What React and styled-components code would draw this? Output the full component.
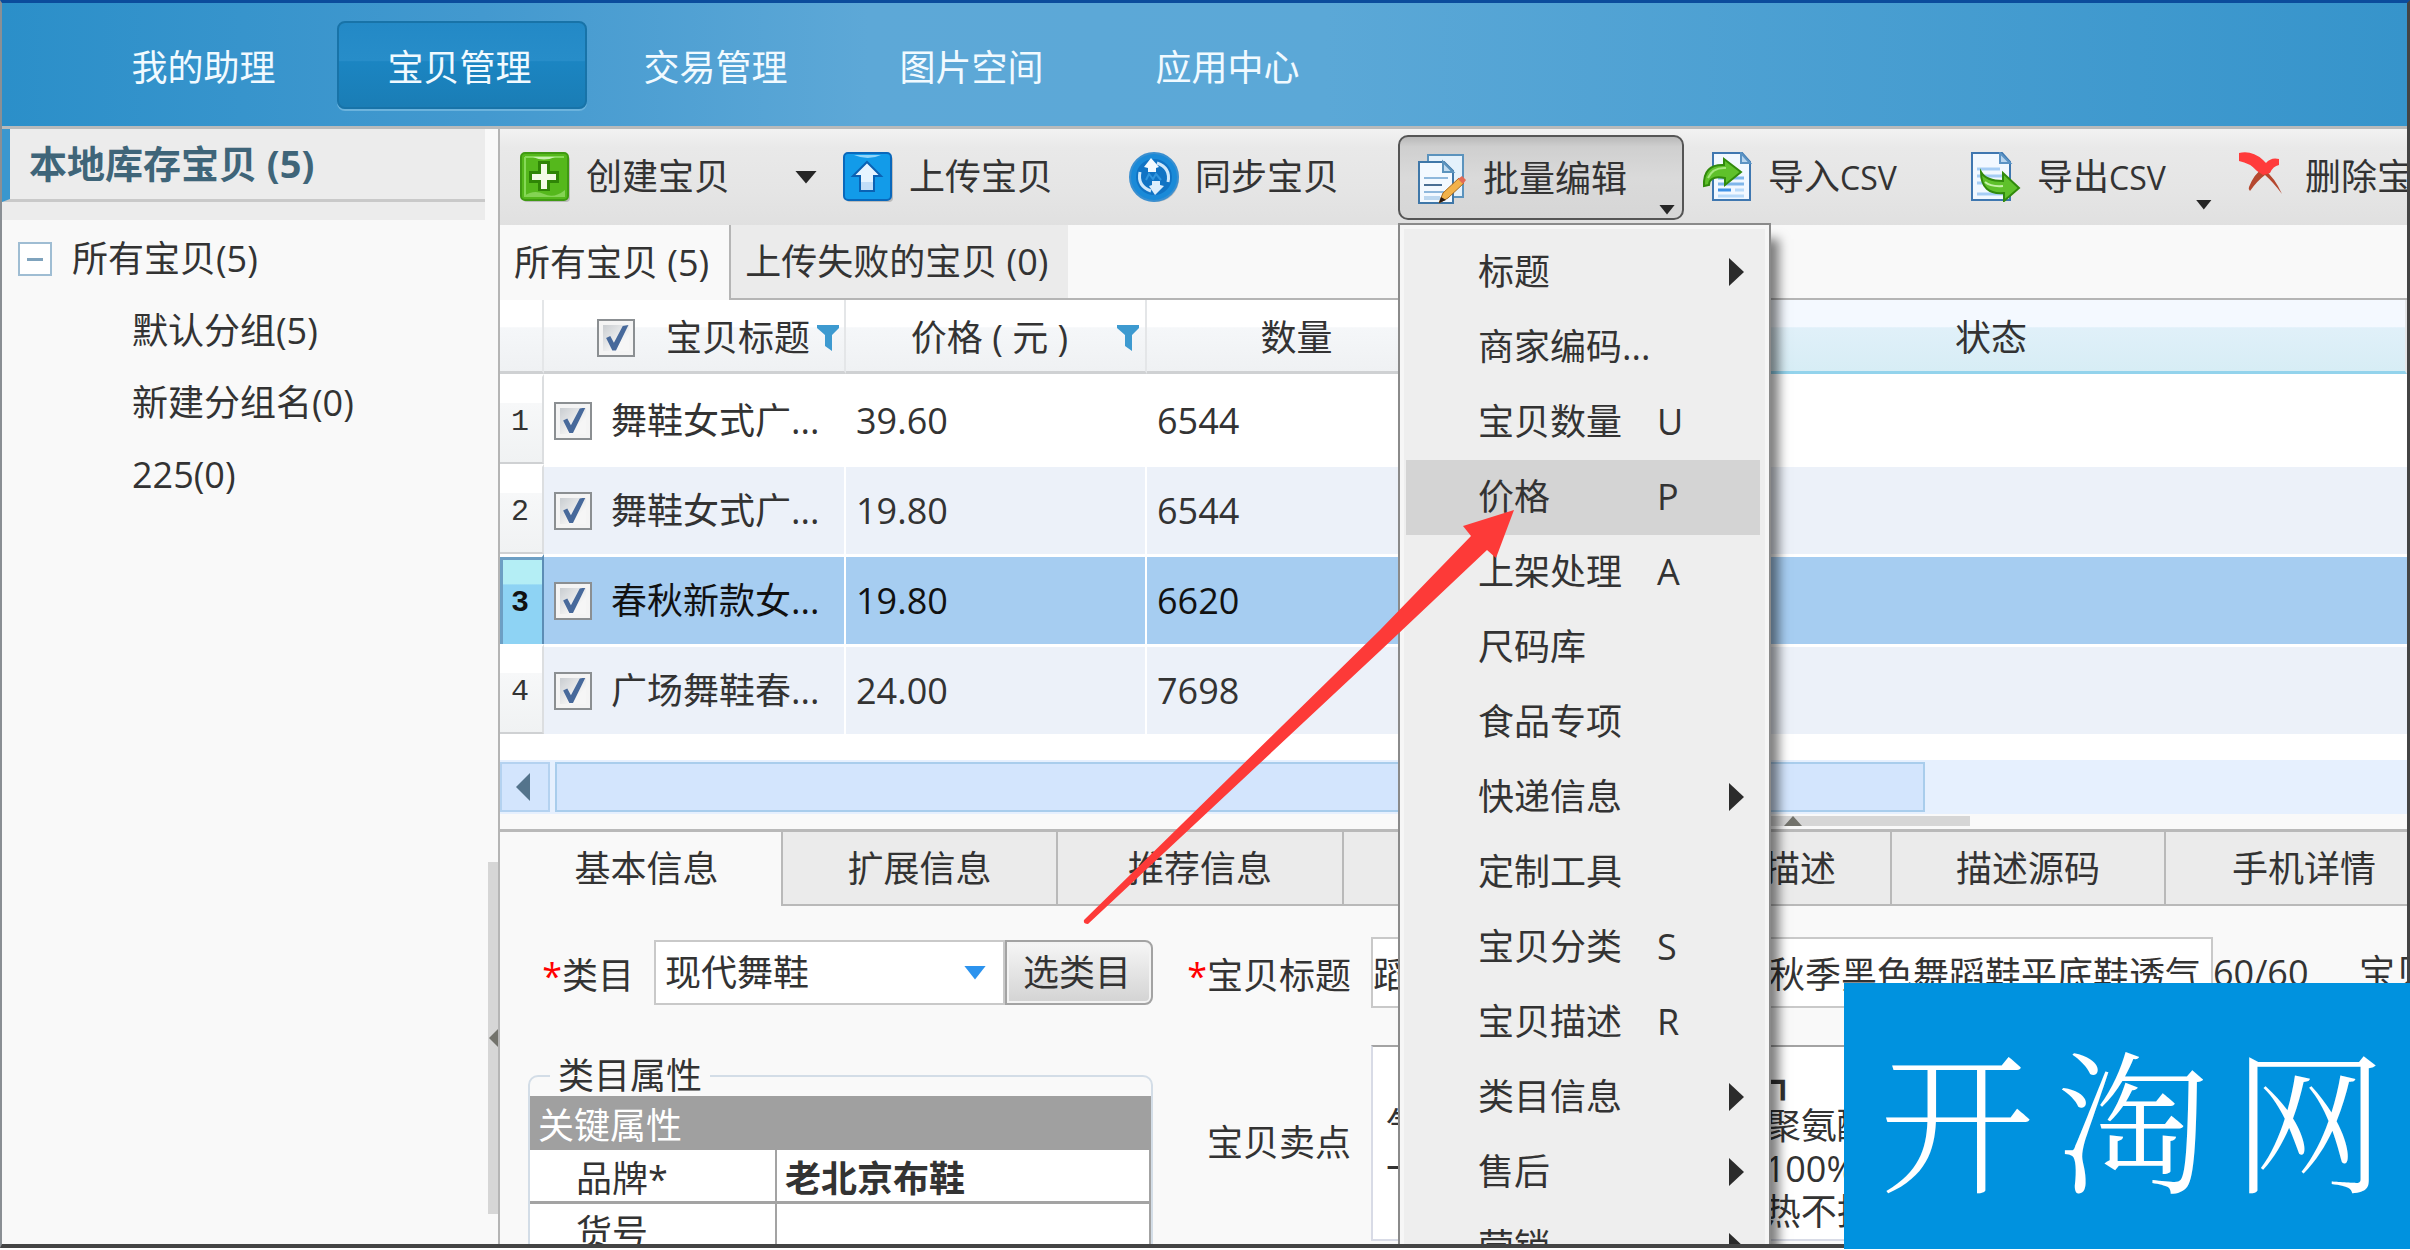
import React from 'react';
import styled, { createGlobalStyle, css } from 'styled-components';

const GlobalStyle = createGlobalStyle`
	* {
		box-sizing: border-box;
	}

	body {
		margin: 0;
		background: #fff;
		overflow: hidden;
	}

	body, button, input, select, textarea {
		font-family: "Open Sans", "Noto Sans CJK SC", sans-serif;
		font-size: 36px;
		line-height: 40px;
		color: #333;
	}
`

const Page = styled.div`
	position: relative;
	height: 100vh;
	padding-bottom: 2px;
	overflow: hidden;
`

const Window = styled.div`
	display: flex;
	flex-direction: column;
	height: 100%;
	border: solid #444;
	border-width: 3px 3px 4px 2px;
	border-top-color: #0b4c9c;
	border-left-color: #8a8f94;
	background: #f9f9f9;
	overflow: hidden;
`

/* ---------- header ---------- */

const Nav = styled.nav`
	display: flex;
	flex: none;
	gap: 6px;
	height: 126px;
	padding: 18px 0 0 79px;
	border-bottom: 3px solid #b8babb;
	background: linear-gradient(90deg, #2b8fc9 0, #4399cf 20%, #5da8d7 36%, #5ba8d7 55%, #3694cb 100%);
`

const NavLink = styled.a`
	display: flex;
	align-items: center;
	justify-content: center;
	width: 250px;
	height: 88px;
	padding: 5px 5px 0 0;
	border: 2px solid transparent;
	border-radius: 8px;
	color: #f1faff;
	text-decoration: none;

	${({ $active }) => $active && css`
		border-color: #1873a8;
		background: linear-gradient(#2389c6 0, #278dc9 45%, #1b85c2 46%, #1a7db5 100%);
		box-shadow: 0 2px 0 #6bb3dd;
	`}
`

const Body = styled.div`
	display: flex;
	flex: 1;
	min-height: 0;
`

/* ---------- sidebar ---------- */

const Sidebar = styled.aside`
	display: flex;
	flex: none;
	width: 496px;
`

const SidebarContent = styled.div`
	flex: 1;
`

const SidebarTitle = styled.h2`
	height: 73px;
	margin: 0;
	padding: 14px 0 0 19px;
	border-left: 8px solid #3a97ce;
	border-bottom: 3px solid #c9c9c9;
	background: #ececec;
	color: #3f6579;
	font-size: 38px;
	line-height: 40px;
`

const SidebarStrip = styled.div`
	height: 18px;
	background: #ececec;
`

const Tree = styled.ul`
	margin: 0;
	padding: 3px 0 0 16px;
	list-style: none;
`

const TreeItem = styled.li`
	display: flex;
	align-items: center;
	gap: 20px;
	height: 72px;
	padding-left: ${({ $child }) => ($child ? '114px' : '0')};
`

const Collapse = styled.button`
	width: 34px;
	height: 34px;
	padding: 0;
	border: 2px solid #9fbdd3;
	background: #fff;

	&::after {
		content: "";
		display: block;
		width: 16px;
		height: 3px;
		margin: 0 auto;
		background: #7fa3bd;
	}
`

const SideSplitter = styled.div`
	flex: none;
	width: 13px;
	padding: 733px 0 0 3px;
`

const SideHandle = styled.div`
	display: flex;
	align-items: center;
	height: 352px;
	background: #d6d6d6;
`

/* ---------- toolbar ---------- */

const Main = styled.main`
	display: flex;
	flex: 1;
	flex-direction: column;
	min-width: 0;
	border-left: 2px solid #b5b5b5;
`

const Toolbar = styled.div`
	display: grid;
	flex: none;
	grid-template-columns: 323px 286px 269px 304px 269px 268px 260px;
	align-items: center;
	height: 96px;
	padding-left: 20px;
	background: linear-gradient(#f2f2f2 0, #e9e9e9 20%, #e5e5e5 65%, #e0e0e0 100%);
`

const ToolWrap = styled.div`
	position: relative;
	display: flex;
	align-items: flex-end;
`

const Tool = styled.button`
	display: flex;
	align-items: center;
	gap: 16px;
	height: 85px;
	padding: 0;
	border: 0;
	background: none;
	white-space: nowrap;

	${({ $pressed }) => $pressed && css`
		width: 286px;
		padding: 3px 0 0 17px;
		border: 2px solid #555;
		border-radius: 10px;
		background: linear-gradient(#b9b9b9 0, #cfcfcf 12%, #dadada 50%, #d6d6d6 100%);
	`}
`

const Latin = styled.span`
	font-size: 32px;
`

const ToolText = styled.span`
	display: flex;
	align-items: baseline;
`

const Caret = styled.span`
	width: ${({ $large }) => ($large ? '22px' : '16px')};
	height: ${({ $large }) => ($large ? '13px' : '10px')};
	margin: ${({ $large }) => ($large ? '0 0 36px 65px' : '0 0 10px 30px')};
	background: #262626;
	clip-path: polygon(0 0, 100% 0, 50% 100%);
`

const PressedCaret = styled(Caret)`
	align-self: flex-end;
	margin: 0 0 3px 16px;
`

/* ---------- dropdown menu ---------- */

const Menu = styled.ul`
	position: absolute;
	z-index: 2;
	top: 88px;
	left: 0;
	width: 373px;
	margin: 0;
	padding: 10px 9px 9px 6px;
	border: 2px solid #8a8a8a;
	background: #eee;
	box-shadow: 10px 14px 10px -2px rgba(0, 0, 0, 0.5), inset 0 0 0 4px #f6f6f6;
	list-style: none;
`

const MenuItem = styled.li`
	background: ${({ $hover }) => ($hover ? '#d4d4d4' : 'transparent')};
`

const MenuButton = styled.button`
	display: grid;
	grid-template-columns: 179px 72px 15px;
	align-items: center;
	width: 100%;
	height: 75px;
	padding: 0 0 0 72px;
	border: 0;
	background: none;
	text-align: left;
	white-space: nowrap;
`

const SubArrow = styled.span`
	grid-column: 3;
	width: 15px;
	height: 28px;
	background: #2b2b2b;
	clip-path: polygon(0 0, 100% 50%, 0 100%);
`

/* ---------- item tabs and grid ---------- */

const ListTabs = styled.div`
	display: flex;
	flex: none;
	height: 75px;

	&::after {
		content: "";
		flex: 1;
		border-bottom: 2px solid #b5b5b5;
	}
`

const ListTab = styled.button`
	padding: 0 20px 0 14px;
	border: 0;
	background: #f9f9f9;
	text-align: left;
	white-space: nowrap;

	${({ $active }) => !$active && css`
		border: solid #b5b5b5;
		border-width: 0 0 2px 2px;
		background: #ebebeb;
	`}
`

const GridArea = styled.div`
	flex: none;
	height: 460px;
	background: #fff;
	overflow: hidden;
`

const Grid = styled.table`
	width: 100%;
	table-layout: fixed;
	border-collapse: separate;
	border-spacing: 0;
`

const Col = styled.col`
	width: ${({ $w }) => ($w ? `${$w}px` : 'auto')};
`

const Th = styled.th`
	height: 74px;
	padding: 5px 0 0;
	border-right: 2px solid #e4e6e8;
	border-bottom: 3px solid #cfd1d3;
	background: linear-gradient(#fff 0, #fff 38%, #f5f7f9 39%, #eff1f3 100%);
	font-weight: 400;

	${({ $hover }) => $hover && css`
		border-bottom-color: #93d3ec;
		background: linear-gradient(#f4f9ff 0, #f4f9ff 38%, #e0f0f9 39%, #d7edf5 100%);
	`}
`

const TitleHead = styled.div`
	display: flex;
	align-items: center;
	justify-content: flex-end;
	padding-right: 5px;

	label {
		margin: 0 7px 0 31px;
	}
`

const PriceHead = styled.div`
	display: grid;
	grid-template-columns: 16px 1fr 28px;
	align-items: center;
	white-space: nowrap;
`

const Row = styled.tr`
	background: ${({ $selected, $odd }) => ($selected ? '#a6cdf1' : $odd ? '#ecf1f9' : '#fff')};
	color: ${({ $selected }) => ($selected ? '#111' : '#333')};
`

const RowHead = styled.th`
	height: 90px;
	padding: 4px 2px 0 0;
	border-top: 3px solid #fff;
	border-right: 2px solid #dcdee0;
	border-bottom: 2px solid #cfd1d3;
	background: linear-gradient(#fff 0, #fff 30%, #f7f8f9 31%, #f0f2f3 100%);
	font-family: "Liberation Mono", monospace;
	font-size: 30px;
	font-weight: 400;

	${({ $selected }) => $selected && css`
		border-right-color: #5c8db5;
		border-bottom: 0;
		background: linear-gradient(#b4eef5 0, #b4eef5 31%, #8ed3f4 32%, #8ed3f4 100%);
		box-shadow: inset 3px 3px 0 #6d9fc4;
		font-weight: 700;
	`}
`

const Cell = styled.td`
	height: 90px;
	padding: 0 0 0 10px;
	border: solid #fff;
	border-width: 3px 2px 0 0;
	white-space: nowrap;

	&:nth-child(n + 5) {
		border-right: 0;
	}
`

const ItemName = styled.div`
	display: flex;
	align-items: center;
	gap: 19px;
`

const Checkbox = styled.input.attrs({ type: 'checkbox' })`
	appearance: none;
	width: 38px;
	height: 38px;
	margin: 0;
	padding: 4px;
	border: 2px solid #8b8f92;
	background: linear-gradient(135deg, #c9cdd1, #f6f6f6 70%) content-box, #f4f4f4;

	&:checked::after {
		content: "";
		display: block;
		width: 26px;
		height: 26px;
		background: #47699b;
		clip-path: polygon(12% 50%, 28% 42%, 42% 68%, 76% 4%, 98% 0, 50% 98%, 36% 98%);
	}
`

const ScrollBar = styled.div`
	display: flex;
	flex: none;
	gap: 5px;
	height: 54px;
	padding: 2px 0;
	background: #e6f0fe;
`

const ScrollButton = styled.button`
	display: flex;
	align-items: center;
	justify-content: center;
	width: 50px;
	padding: 0 4px 0 0;
	border: 2px solid #b4d2f0;
	background: #d3e5fd;
`

const ScrollThumb = styled.div`
	width: 1370px;
	border: 2px solid #a9cdec;
	background: #d3e5fd;
`

const BottomSplitter = styled.div`
	flex: none;
	height: 15px;
	padding: 2px 0 0 1116px;
`

const BottomHandle = styled.div`
	display: flex;
	justify-content: center;
	align-items: center;
	width: 354px;
	height: 10px;
	background: #d6d6d6;
`

/* ---------- detail panel ---------- */

const InfoTabs = styled.div`
	display: flex;
	flex: none;
	height: 77px;
	border-top: 3px solid #b9b9b9;
`

const InfoTab = styled.button`
	flex: none;
	width: ${({ $w }) => $w}px;
	padding: 2px 0 0;
	border: solid #b9b9b9;
	border-width: 0 0 2px 2px;
	background: #ebebeb;

	${({ $active }) => $active && css`
		padding-left: 10px;
		border-color: #f9f9f9;
		background: #f9f9f9;
	`}
`

const Form = styled.form`
	display: flex;
	gap: 34px;
	padding: 31px 0 0 28px;
`

const FormColumn = styled.div`
	flex: none;
	width: ${({ $w }) => ($w ? `${$w}px` : 'auto')};
`

const Field = styled.div`
	display: flex;
	align-items: center;
	height: ${({ $tall }) => ($tall ? '196px' : '71px')};
	margin-top: ${({ $tall }) => ($tall ? '37px' : '0')};
`

const Label = styled.label`
	flex: none;
	width: ${({ $w }) => $w}px;
	margin-right: 20px;
	padding-top: ${({ $flat }) => ($flat ? '0' : '6px')};
	text-align: right;
	white-space: nowrap;
`

const Star = styled.span`
	color: #f00;
`

const SelectWrap = styled.div`
	display: grid;
	align-items: center;
	width: 351px;
	height: 65px;
`

const Select = styled.select`
	grid-area: 1 / 1;
	appearance: none;
	width: 100%;
	height: 100%;
	padding: 0 9px;
	border: 2px solid #c9c9c9;
	border-radius: 0;
	background: #fff;
`

const SelectCaret = styled.span`
	grid-area: 1 / 1;
	justify-self: end;
	width: 22px;
	height: 14px;
	margin-right: 19px;
	background: #2c93ee;
	clip-path: polygon(0 0, 100% 0, 50% 100%);
	pointer-events: none;
`

const PickButton = styled.button`
	width: 148px;
	height: 65px;
	padding: 0 4px 0 0;
	border: 2px solid #a3a3a3;
	border-radius: 0 8px 8px 0;
	background: linear-gradient(#f6f6f6, #d3d3d3);
	box-shadow: inset 0 0 0 2px #f3f3f3;
`

const Fieldset = styled.fieldset`
	min-width: 0;
	margin: 48px 0 0;
	padding: 0;
	border: 2px solid #d3dde7;
	border-radius: 10px;
`

const Legend = styled.legend`
	height: 40px;
	margin-left: 20px;
	padding: 0 8px;
`

const PropsTable = styled.table`
	width: 100%;
	table-layout: fixed;
	border-collapse: separate;
	border-spacing: 0;
	background: #fff;

	caption {
		height: 54px;
		padding: 10px 8px 0;
		background: #a0a0a0;
		color: #fff;
		text-align: left;
	}

	th, td {
		height: 54px;
		padding: 6px 0 0 8px;
		border: solid #a3a3a3;
		border-width: 0 2px 3px 0;
		text-align: left;
	}

	th {
		width: 247px;
		padding-left: 46px;
		font-weight: 400;
	}

	td {
		font-weight: 700;
	}
`

const TextInput = styled.input`
	width: 842px;
	height: 71px;
	padding: 0;
	border: 2px solid #c9c9c9;
	background: #fff;
`

const TextArea = styled.textarea`
	width: 842px;
	height: 196px;
	padding: 14px 0 0 13px;
	border: 2px solid #d8dbe6;
	border-top-color: #a3a3a3;
	background: #fff;
	line-height: 43px;
	white-space: pre;
	resize: none;
	overflow: hidden;
`

const Counter = styled.span`
	width: 146px;
`

/* ---------- overlays ---------- */

const Pointer = styled.svg`
	position: absolute;
	z-index: 3;
	top: 505px;
	left: 1080px;
`

const Watermark = styled.div`
	position: absolute;
	z-index: 4;
	right: 0;
	bottom: 1px;
	display: flex;
	align-items: center;
	justify-content: center;
	gap: 22px;
	width: 566px;
	height: 266px;
	padding-left: 12px;
	background: #0092df;
	color: #fff;
	font-family: "Noto Serif CJK SC", "Noto Sans CJK SC", serif;
	font-size: 154px;
	font-weight: 300;
	line-height: 180px;
`

/* ---------- icons ---------- */

const Icon = ({ children }) => (
	<svg width="50" height="50" viewBox="0 0 50 50" aria-hidden="true">{children}</svg>
)

const CreateIcon = () => (
	<Icon>
		<rect x="3" y="4" width="47" height="46" rx="4" fill="#000" opacity=".18" />
		<rect x="1" y="1" width="47" height="47" rx="4" fill="#55b81c" stroke="#3f9a12" strokeWidth="2" />
		<path d="M5 5h39M5 5v39" stroke="#86d957" strokeWidth="2" fill="none" />
		<path d="M13 5h22q-11 5-22 0z" fill="#c7f0ad" />
		<path d="M4 44q10-7 20-2t21-4v7H4z" fill="#84d354" />
		<path d="M18 9h12v10h9v12h-9v8H18v-8H9V19h9z" fill="#2f8506" />
		<path d="M21 12h6v10h9v6h-9v9h-6v-9h-9v-6h9z" fill="#f3fbe6" />
	</Icon>
)

const UploadIcon = () => (
	<Icon>
		<rect x="3" y="4" width="47" height="46" rx="4" fill="#000" opacity=".18" />
		<rect x="1" y="1" width="47" height="47" rx="4" fill="#129be9" stroke="#0a68bb" strokeWidth="2" />
		<path d="M11 3h27q-13 6-27 0z" fill="#8fd5fa" />
		<path d="M24 10 38 24h-7v15H17V24h-7z" fill="#e6f4ff" stroke="#0a62b4" strokeWidth="2" />
		<path d="M18 30h12v8H18z" fill="#c2def8" />
	</Icon>
)

const SyncIcon = () => (
	<Icon>
		<circle cx="27" cy="27" r="23" fill="#000" opacity=".16" />
		<circle cx="25" cy="25" r="24" fill="#1a8ad8" stroke="#3a8fd0" strokeWidth="2" />
		<circle cx="25" cy="25" r="18" fill="#1073c4" />
		<path d="M11 20q-3 14 11 19" stroke="#cfe8fb" strokeWidth="3" fill="none" />
		<path d="M39 30q3-14-11-19" stroke="#cfe8fb" strokeWidth="3" fill="none" />
		<path d="m15 15 7-9 8 9-3 1v4h-8v-4z" fill="#f3faff" />
		<path d="m20 34 6 9 9-9-4-1v-4h-8v4z" fill="#dceefc" />
		<path d="m17 28 3-6 4 5 3-5 5 6" stroke="#2f95dd" strokeWidth="2" fill="none" />
	</Icon>
)

const EditIcon = () => (
	<Icon>
		<path d="M11 1h35v42H11z" fill="#e4f1fb" stroke="#5b93bd" strokeWidth="2" />
		<path d="M2 8h25l9 9v32H2z" fill="#f3f9ff" stroke="#3f77a8" strokeWidth="2" />
		<path d="M26 8v10h10z" fill="#c3dcf0" stroke="#5b93bd" strokeWidth="2" />
		<path d="M7 24h24M7 38h20" stroke="#8fb8dc" strokeWidth="2" />
		<path d="M7 31h18" stroke="#4a6f94" strokeWidth="2" />
		<path d="M7 44h16" stroke="#bcd7ef" strokeWidth="4" />
		<path d="m22 49 4-10 16-15 5 5-16 15z" fill="#f2b24a" stroke="#a86a1d" strokeWidth="1" />
		<path d="m41 25 4-3 4 4-3 4z" fill="#e36a54" />
		<path d="m22 49 2-6 5 3z" fill="#2b1b12" />
	</Icon>
)

const ImportIcon = () => (
	<Icon>
		<path d="M11 1h29l8 9v38H11z" fill="#f1f8ff" stroke="#3f77b0" strokeWidth="2" />
		<path d="M39 1v10h9z" fill="#b9d5ee" stroke="#5b93c4" strokeWidth="2" />
		<path d="M16 26h26M16 32h26" stroke="#7fb6ea" strokeWidth="3" />
		<path d="M16 38h13" stroke="#3f92e6" strokeWidth="3" />
		<path d="M33 38h9M16 44h26" stroke="#b7dafa" strokeWidth="3" />
		<path d="M2 34Q1 12 22 13V7l17 13-16 13v-7q-9-2-13 1-3 2-3 6z" fill="#5fc12b" stroke="#318a0c" strokeWidth="2" />
		<path d="M6 26q5-11 18-10" stroke="#a6e67f" strokeWidth="2" fill="none" />
	</Icon>
)

const ExportIcon = () => (
	<Icon>
		<path d="M1 1h30l8 9v38H1z" fill="#f1f8ff" stroke="#3f77b0" strokeWidth="2" />
		<path d="M29 1v10h10z" fill="#b9d5ee" stroke="#5b93c4" strokeWidth="2" />
		<path d="M6 17h23M6 24h28M6 31h28M6 42h26" stroke="#a5cdf5" strokeWidth="3" />
		<path d="M10 20q5 9 22 9v-8l16 15-15 13v-8Q10 43 10 20z" fill="#5fc12b" stroke="#318a0c" strokeWidth="2" />
		<path d="M14 30q6 5 18 4" stroke="#c3f1a6" strokeWidth="2" fill="none" />
	</Icon>
)

const DeleteIcon = () => (
	<Icon>
		<path d="M24 16q12 10 19 26-9-12-17-19-8 6-15 16-2-2-1-4 5-13 14-19z" fill="#b5482f" />
		<path d="M0 1q13-3 24 7l3 3q5-6 13-4v6q-6 1-9 8l-7 2-6-4Q11 11 0 9z" fill="#ff3b3b" />
	</Icon>
)

const Funnel = () => (
	<svg width="22" height="26" viewBox="0 0 22 26" aria-hidden="true">
		<path d="M0 0h22v3l-7 7v16l-7-5V10L0 3z" fill="#3d9ad0" />
	</svg>
)

const navItems = ['我的助理', '宝贝管理', '交易管理', '图片空间', '应用中心']

const treeItems = ['默认分组(5)', '新建分组名(0)', '225(0)']

const menuItems = [
	{ text: '标题', sub: true },
	{ text: '商家编码...' },
	{ text: '宝贝数量', hotkey: 'U' },
	{ text: '价格', hotkey: 'P' },
	{ text: '上架处理', hotkey: 'A' },
	{ text: '尺码库' },
	{ text: '食品专项' },
	{ text: '快递信息', sub: true },
	{ text: '定制工具' },
	{ text: '宝贝分类', hotkey: 'S' },
	{ text: '宝贝描述', hotkey: 'R' },
	{ text: '类目信息', sub: true },
	{ text: '售后', sub: true },
	{ text: '营销', sub: true },
]

const rows = [
	{ name: '舞鞋女式广...', price: '39.60', count: '6544' },
	{ name: '舞鞋女式广...', price: '19.80', count: '6544' },
	{ name: '春秋新款女...', price: '19.80', count: '6620' },
	{ name: '广场舞鞋春...', price: '24.00', count: '7698' },
]

const infoTabs = [
	{ text: '基本信息', w: 281 },
	{ text: '扩展信息', w: 275 },
	{ text: '推荐信息', w: 286 },
	{ text: '', w: 294 },
	{ text: '宝贝描述', w: 254 },
	{ text: '描述源码', w: 274 },
	{ text: '手机详情', w: 278 },
]

const sellingPoints = [
	'　　　　　　　　　　  ┓',
	'气质优雅舒适柔软耐磨  聚氨酯',
	'一脚蹬设计鞋面透气性  100%顶',
	'　不怕冷也不怕水更不  热不挂',
].join('\n')

const App = () => {
	return (
		<Page>
			<GlobalStyle />
			<Window>
				<Nav>
					{navItems.map((text) => (
						<NavLink href="#" key={text} $active={text === '宝贝管理'}>{text}</NavLink>
					))}
				</Nav>
				<Body>
					<Sidebar>
						<SidebarContent>
							<SidebarTitle>本地库存宝贝 (5)</SidebarTitle>
							<SidebarStrip />
							<Tree>
								<TreeItem>
									<Collapse type="button" aria-label="折叠" />
									所有宝贝(5)
								</TreeItem>
								{treeItems.map((text) => (
									<TreeItem key={text} $child>{text}</TreeItem>
								))}
							</Tree>
						</SidebarContent>
						<SideSplitter>
							<SideHandle>
								<svg width="10" height="18" viewBox="0 0 10 18" aria-hidden="true">
									<path d="M10 0v18L1 9z" fill="#73736c" />
								</svg>
							</SideHandle>
						</SideSplitter>
					</Sidebar>
					<Main>
						<Toolbar>
							<ToolWrap>
								<Tool type="button"><CreateIcon />创建宝贝</Tool>
								<Caret $large />
							</ToolWrap>
							<ToolWrap>
								<Tool type="button"><UploadIcon />上传宝贝</Tool>
							</ToolWrap>
							<ToolWrap>
								<Tool type="button"><SyncIcon />同步宝贝</Tool>
							</ToolWrap>
							<ToolWrap>
								<Tool type="button" $pressed>
									<EditIcon />批量编辑
									<PressedCaret />
								</Tool>
								<Menu>
									{menuItems.map(({ text, hotkey, sub }) => (
										<MenuItem key={text} $hover={text === '价格'}>
											<MenuButton type="button">
												<span>{text}</span>
												{hotkey && <span>{hotkey}</span>}
												{sub && <SubArrow />}
											</MenuButton>
										</MenuItem>
									))}
								</Menu>
							</ToolWrap>
							<ToolWrap>
								<Tool type="button">
									<ImportIcon />
									<ToolText>导入<Latin>CSV</Latin></ToolText>
								</Tool>
							</ToolWrap>
							<ToolWrap>
								<Tool type="button">
									<ExportIcon />
									<ToolText>导出<Latin>CSV</Latin></ToolText>
								</Tool>
								<Caret />
							</ToolWrap>
							<ToolWrap>
								<Tool type="button"><DeleteIcon />删除宝贝</Tool>
							</ToolWrap>
						</Toolbar>

						<ListTabs>
							<ListTab type="button" $active>所有宝贝 (5)</ListTab>
							<ListTab type="button">上传失败的宝贝 (0)</ListTab>
						</ListTabs>

						<GridArea>
							<Grid>
								<colgroup>
									<Col $w={44} />
									<Col $w={302} />
									<Col $w={301} />
									<Col $w={301} />
									<Col $w={129} />
									<Col />
								</colgroup>
								<thead>
									<tr>
										<Th />
										<Th>
											<TitleHead>
												<Checkbox id="all" defaultChecked />
												<label htmlFor="all">宝贝标题</label>
												<Funnel />
											</TitleHead>
										</Th>
										<Th>
											<PriceHead>
												<span />
												<span>价格 ( 元 )</span>
												<Funnel />
											</PriceHead>
										</Th>
										<Th>数量</Th>
										<Th />
										<Th $hover>状态</Th>
									</tr>
								</thead>
								<tbody>
									{rows.map(({ name, price, count }, i) => (
										<Row key={i} $odd={i % 2 === 1} $selected={i === 2}>
											<RowHead $selected={i === 2}>{i + 1}</RowHead>
											<Cell>
												<ItemName>
													<Checkbox id={`item-${i}`} defaultChecked />
													<label htmlFor={`item-${i}`}>{name}</label>
												</ItemName>
											</Cell>
											<Cell>{price}</Cell>
											<Cell>{count}</Cell>
											<Cell />
											<Cell />
										</Row>
									))}
								</tbody>
							</Grid>
						</GridArea>
						<ScrollBar>
							<ScrollButton type="button" aria-label="向左滚动">
								<svg width="14" height="28" viewBox="0 0 14 28" aria-hidden="true">
									<path d="M14 0v28L0 14z" fill="#54748c" />
								</svg>
							</ScrollButton>
							<ScrollThumb />
						</ScrollBar>
						<BottomSplitter>
							<BottomHandle>
								<svg width="18" height="10" viewBox="0 0 18 10" aria-hidden="true">
									<path d="M0 10h18L9 0z" fill="#73736c" />
								</svg>
							</BottomHandle>
						</BottomSplitter>

						<InfoTabs>
							{infoTabs.map(({ text, w }, i) => (
								<InfoTab type="button" key={w} $w={w} $active={i === 0}>{text}</InfoTab>
							))}
						</InfoTabs>
						<Form>
							<FormColumn $w={625}>
								<Field>
									<Label $w={106} htmlFor="category"><Star>*</Star>类目</Label>
									<SelectWrap>
										<Select id="category">
											<option>现代舞鞋</option>
										</Select>
										<SelectCaret />
									</SelectWrap>
									<PickButton type="button">选类目</PickButton>
								</Field>
								<Fieldset>
									<Legend>类目属性</Legend>
									<PropsTable>
										<caption>关键属性</caption>
										<tbody>
											<tr>
												<th>品牌*</th>
												<td>老北京布鞋</td>
											</tr>
											<tr>
												<th>货号</th>
												<td />
											</tr>
										</tbody>
									</PropsTable>
								</Fieldset>
							</FormColumn>
							<FormColumn>
								<Field>
									<Label $w={164} htmlFor="title"><Star>*</Star>宝贝标题</Label>
									<TextInput id="title" defaultValue="蹈鞋女式广场舞鞋新款底秋季黑色舞蹈鞋平底鞋透气" />
									<Counter>60/60</Counter>
									<span>宝贝</span>
								</Field>
								<Field $tall>
									<Label $w={164} $flat htmlFor="points">宝贝卖点</Label>
									<TextArea id="points" defaultValue={sellingPoints} />
								</Field>
							</FormColumn>
						</Form>
					</Main>
				</Body>
			</Window>
			<Pointer width="440" height="425" viewBox="1080 505 440 425" aria-hidden="true">
				<path d="M1514 510 1463 526l8 10-91 94-296 290q-1 4 4 4l292-273 107-101 9 8z" fill="#fd3a38" />
			</Pointer>
			<Watermark>
				<span>开</span>
				<span>淘</span>
				<span>网</span>
			</Watermark>
		</Page>
	)
}

export default App;
